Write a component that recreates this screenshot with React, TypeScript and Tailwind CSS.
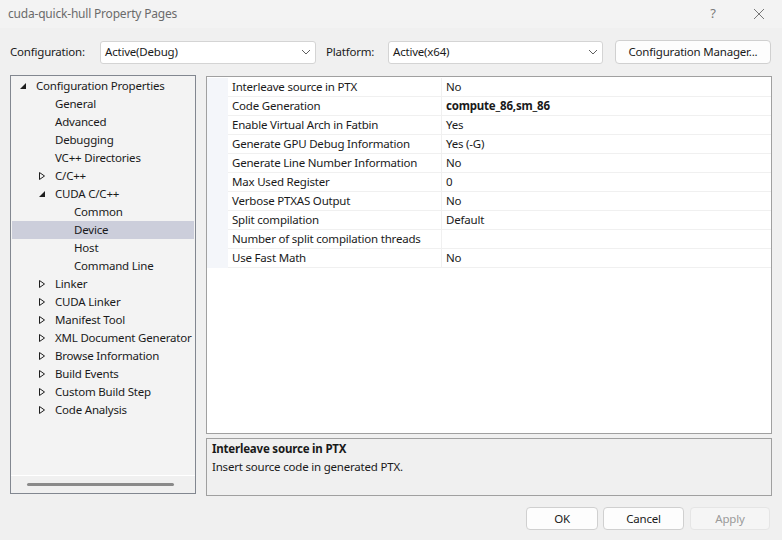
import React from "react";

// Tree nodes: level, label, expander state
const tree: { level: number; label: string; exp?: "open" | "closed" }[] = [
  { level: 0, label: "Configuration Properties", exp: "open" },
  { level: 1, label: "General" },
  { level: 1, label: "Advanced" },
  { level: 1, label: "Debugging" },
  { level: 1, label: "VC++ Directories" },
  { level: 1, label: "C/C++", exp: "closed" },
  { level: 1, label: "CUDA C/C++", exp: "open" },
  { level: 2, label: "Common" },
  { level: 2, label: "Device" },
  { level: 2, label: "Host" },
  { level: 2, label: "Command Line" },
  { level: 1, label: "Linker", exp: "closed" },
  { level: 1, label: "CUDA Linker", exp: "closed" },
  { level: 1, label: "Manifest Tool", exp: "closed" },
  { level: 1, label: "XML Document Generator", exp: "closed" },
  { level: 1, label: "Browse Information", exp: "closed" },
  { level: 1, label: "Build Events", exp: "closed" },
  { level: 1, label: "Custom Build Step", exp: "closed" },
  { level: 1, label: "Code Analysis", exp: "closed" },
];

const props: { name: string; value: string; bold?: boolean }[] = [
  { name: "Interleave source in PTX", value: "No" },
  { name: "Code Generation", value: "compute_86,sm_86", bold: true },
  { name: "Enable Virtual Arch in Fatbin", value: "Yes" },
  { name: "Generate GPU Debug Information", value: "Yes (-G)" },
  { name: "Generate Line Number Information", value: "No" },
  { name: "Max Used Register", value: "0" },
  { name: "Verbose PTXAS Output", value: "No" },
  { name: "Split compilation", value: "Default" },
  { name: "Number of split compilation threads", value: "" },
  { name: "Use Fast Math", value: "No" },
];

const indent = ["pl-[5px]", "pl-[24px]", "pl-[43px]"];

function Expander({ exp }: { exp?: "open" | "closed" }) {
  if (exp === "open")
    return (
      <svg width="14" height="10" viewBox="0 0 14 10" className="shrink-0">
        <polygon points="3,8 9,8 9,2" fill="#1e1e1e" />
      </svg>
    );
  if (exp === "closed")
    return (
      <svg width="14" height="10" viewBox="0 0 14 10" className="shrink-0">
        <polygon points="3.5,1.5 8.5,5 3.5,8.5" fill="none" stroke="#1e1e1e" strokeWidth="1" />
      </svg>
    );
  return <span className="w-[14px] shrink-0" />;
}

function Chevron() {
  return (
    <svg width="10" height="6" viewBox="0 0 10 6">
      <path d="M1 1 L5 5 L9 1" fill="none" stroke="#5f5f5f" strokeWidth="1" />
    </svg>
  );
}

function Combo({ value, width }: { value: string; width: string }) {
  return (
    <div className={`${width} h-[23px] bg-white border border-[#d4d4d4] rounded-[3px] flex items-center justify-between pl-[4px] pr-[4px]`}>
      <span>{value}</span>
      <Chevron />
    </div>
  );
}

export default function App() {
  return (
    <div
      className="w-[782px] h-[540px] bg-[#f0f0f0] text-[11.5px] tracking-[-0.2px] text-[#1a1a1a] flex flex-col overflow-hidden"
      style={{ fontFamily: '"Noto Sans", "Open Sans", sans-serif' }}
    >
      {/* Title bar */}
      <div className="h-[28px] bg-[#f3f3f3] flex items-center justify-between pl-[8px] shrink-0">
        <span className="text-[#6b6b6b] text-[12px]">cuda-quick-hull Property Pages</span>
        <div className="flex items-center h-full text-[#7a7a7a]">
          <span className="w-[46px] text-center text-[13px]">?</span>
          <span className="w-[46px] flex justify-center">
            <svg width="12" height="12" viewBox="0 0 12 12">
              <path d="M1 1 L11 11 M11 1 L1 11" stroke="#777" strokeWidth="1" />
            </svg>
          </span>
        </div>
      </div>

      {/* Configuration row */}
      <div className="flex items-center pl-[10px] pt-[12px] h-[36px] shrink-0">
        <span className="w-[90px]">Configuration:</span>
        <Combo value="Active(Debug)" width="w-[216px]" />
        <span className="ml-[10px] w-[62px]">Platform:</span>
        <Combo value="Active(x64)" width="w-[215px]" />
        <button className="ml-[12px] w-[156px] h-[24px] bg-[#fdfdfd] border border-[#d0d0d0] rounded-[4px]">
          Configuration Manager...
        </button>
      </div>

      {/* Main area */}
      <div className="flex pl-[10px] pt-[11px] gap-[10px]">
        {/* Tree */}
        <div className="w-[186px] h-[419px] border border-[#828790] bg-[#f3f3f3] flex flex-col">
          <div className="flex-1 pt-[1px] pl-[1px] pr-[1px] overflow-hidden">
            {tree.map((n) => (
              <div
                key={n.label}
                className={`h-[18px] flex items-center whitespace-nowrap ${indent[n.level]} ${
                  n.label === "Device" ? "bg-[#cccedb]" : ""
                }`}
              >
                <Expander exp={n.exp} />
                <span className="ml-[5px]">{n.label}</span>
              </div>
            ))}
          </div>
          <div className="h-[18px] border-t border-white bg-[#f0f0f0] flex items-center justify-center">
            <div className="w-[147px] h-[3px] bg-[#8a8a8a] rounded-full ml-[-6px]" />
          </div>
        </div>

        {/* Property grid + description */}
        <div className="w-[566px] pt-[1px] flex flex-col gap-[4px]">
          <div className="h-[358px] border border-[#a0a0a0] bg-white flex flex-col pt-[1px]">
            {props.map((p) => (
              <div key={p.name} className="h-[19px] flex">
                <div className="w-[21px] bg-[#f4f6fa]" />
                <div className="w-[214px] pl-[4px] flex items-center border-r border-b border-[#f0f0f0]">{p.name}</div>
                <div className={`flex-1 pl-[4px] flex items-center border-b border-[#f0f0f0] ${p.bold ? "font-bold" : ""}`}>
                  {p.value}
                </div>
              </div>
            ))}
          </div>
          <div className="h-[58px] border border-[#a0a0a0] bg-[#f0f0f0] pl-[5px] pt-[1px]">
            <div className="font-bold h-[18px] flex items-center">Interleave source in PTX</div>
            <div className="h-[18px] flex items-center">Insert source code in generated PTX.</div>
          </div>
        </div>
      </div>

      {/* Buttons */}
      <div className="flex justify-end pr-[12px] pt-[11px]">
        <button className="w-[72px] h-[23px] bg-[#fdfdfd] border border-[#d0d0d0] rounded-[4px]">OK</button>
        <button className="ml-[5px] w-[81px] h-[23px] bg-[#fdfdfd] border border-[#d0d0d0] rounded-[4px]">Cancel</button>
        <button className="ml-[6px] w-[80px] h-[23px] bg-[#f5f5f5] border border-[#e5e5e5] rounded-[4px] text-[#9a9a9a]">Apply</button>
      </div>
    </div>
  );
}
